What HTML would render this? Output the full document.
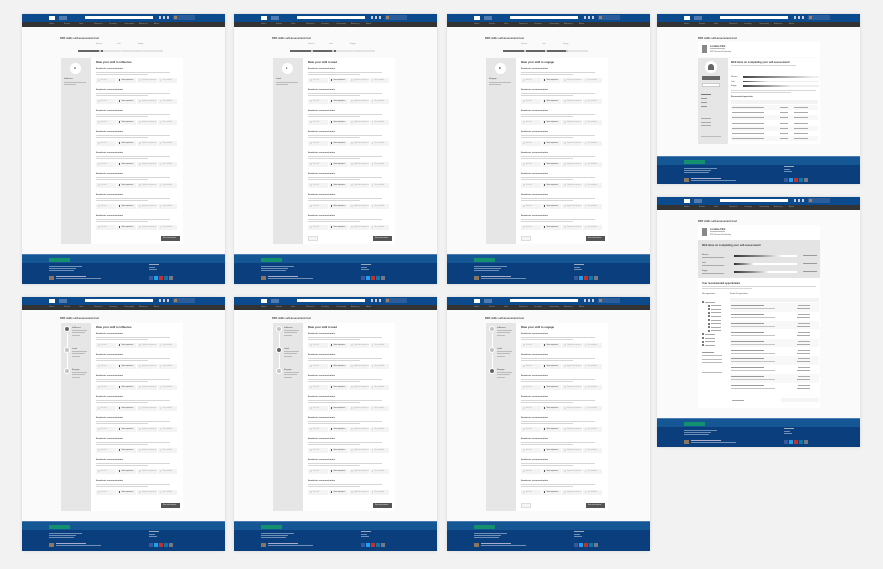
<!DOCTYPE html>
<html><head><meta charset="utf-8">
<style>
*{margin:0;padding:0;box-sizing:border-box}
body{width:883px;height:569px;background:#f2f2f2;position:relative;overflow:hidden;font-family:"Liberation Sans",sans-serif}
.t{position:absolute;background:#fafafa;box-shadow:0 0 3px rgba(0,0,0,.12);overflow:hidden}
.a{position:absolute}
.tx{position:absolute;font-size:2.4px;line-height:3px;color:#666;white-space:nowrap}
</style></head><body>
<script>
var LN='#d6d6d6';
function el(p,css,cls,txt){var d=document.createElement('div');d.className=cls||'a';d.style.cssText=css;if(txt)d.textContent=txt;p.appendChild(d);return d;}
function header(t,w){
 el(t,'left:0;top:0;width:'+w+'px;height:8px;background:#0b4a8c');
 el(t,'left:27px;top:2px;width:6px;height:4px;background:#fff');
 el(t,'left:37px;top:2px;width:8px;height:4px;background:#6f8fc0;opacity:.7');
 el(t,'left:63px;top:2px;width:68px;height:3px;background:#fff');
 el(t,'left:137px;top:2px;width:2px;height:3px;background:#ccd');
 el(t,'left:141px;top:2px;width:2px;height:3px;background:#ccd');
 el(t,'left:145px;top:2px;width:2px;height:3px;background:#ccd');
 el(t,'left:151px;top:1px;width:22px;height:5px;background:#2a5d99');
 el(t,'left:152px;top:2px;width:3px;height:3px;background:#a08060');
 el(t,'left:0;top:8px;width:'+w+'px;height:4.5px;background:#333');
 var nav=['Home','Events','Jobs','Research','Learning','Community','Advocacy','About'];
 for(var i=0;i<nav.length;i++)el(t,'left:'+(27+i*15)+'px;top:8.8px;font-size:2px;color:#999','tx',nav[i]);
}
function footer(t,y,w,h){
 el(t,'left:0;top:'+y+'px;width:'+w+'px;height:'+h+'px;background:#0a3e7c');
 el(t,'left:0;top:'+y+'px;width:'+w+'px;height:1px;background:#4d7cb3');
 el(t,'left:0;top:'+(y+1)+'px;width:'+w+'px;height:8px;background:#155694');
 el(t,'left:27px;top:'+(y+4)+'px;width:21px;height:4px;background:#13906e');
 el(t,'left:27px;top:'+(y+12)+'px;width:33px;height:.7px;background:#6d8fb8');
 el(t,'left:27px;top:'+(y+14)+'px;width:27px;height:.7px;background:#6d8fb8');
 el(t,'left:27px;top:'+(y+16)+'px;width:25px;height:.7px;background:#6d8fb8');
 el(t,'left:127px;top:'+(y+10)+'px;width:10px;height:.7px;background:#9ab');
 el(t,'left:127px;top:'+(y+13)+'px;width:6px;height:.7px;background:#6d8fb8');
 el(t,'left:127px;top:'+(y+15)+'px;width:8px;height:.7px;background:#6d8fb8');
 el(t,'left:27px;top:'+(y+22)+'px;width:5px;height:4px;background:#8a7560');
 el(t,'left:34px;top:'+(y+22)+'px;width:30px;height:.7px;background:#aac');
 el(t,'left:34px;top:'+(y+24)+'px;width:45px;height:.7px;background:#6d8fb8');
 var c=['#3b5998','#1da1f2','#c4302b','#0e76a8','#778'];
 for(var i=0;i<5;i++)el(t,'left:'+(127+i*5)+'px;top:'+(y+22)+'px;width:4px;height:4px;background:'+c[i]);
}
function question(t,x,y,w){
 el(t,'left:'+x+'px;top:'+y+'px;font-size:2.2px;color:#555;font-weight:bold','tx','Academic communication');
 el(t,'left:'+x+'px;top:'+(y+4)+'px;width:'+(w-8)+'px;height:.6px;background:'+LN);
 el(t,'left:'+x+'px;top:'+(y+6)+'px;width:'+(w-30)+'px;height:.6px;background:'+LN);
 var pw=(w-4)/4;
 var lab=['Not at all','Some experience','Significant experience','Very confident'];
 for(var i=0;i<4;i++){
  el(t,'left:'+(x+i*(pw+1))+'px;top:'+(y+10)+'px;width:'+pw+'px;height:4.5px;background:#f3f3f3');
  el(t,'left:'+(x+i*(pw+1)+2)+'px;top:'+(y+11)+'px;width:1.5px;height:2px;background:'+(i==1?'#555':'#ddd'));
  el(t,'left:'+(x+i*(pw+1)+5)+'px;top:'+(y+10.8)+'px;font-size:1.5px;color:'+(i==1?'#444':'#aaa'),'tx',lab[i]);
 }
}
function assess(L,T,H,opt){
 var t=el(document.body,'left:'+L+'px;top:'+T+'px;width:203px;height:'+H+'px','t');
 header(t,203);
 var ty=opt.prog?23:20;
 el(t,'left:38px;top:'+ty+'px;font-size:2.6px;color:#444;font-weight:bold','tx','RDF skills self-assessment tool');
 var ct=opt.prog?44:26;
 if(opt.prog){
  el(t,'left:56px;top:36px;width:85px;height:1.5px;background:#e3e3e3');
  el(t,'left:56px;top:35.5px;width:'+opt.prog+'px;height:2.5px;background:#666');
  var lb=['Influence','Lead','Engage'];
  for(var i=0;i<3;i++){el(t,'left:'+(74+i*21)+'px;top:29px;font-size:1.6px;color:#999','tx',lb[i]);el(t,'left:'+(77+i*21)+'px;top:35.5px;width:2px;height:2px;background:#eee;border-radius:50%');}
 }
 var cb=opt.cb;
 el(t,'left:39px;top:'+ct+'px;width:30px;height:'+(cb-ct)+'px;background:#e6e6e6');
 el(t,'left:69px;top:'+ct+'px;width:92px;height:'+(cb-ct)+'px;background:#fff');
 if(opt.prog){
  el(t,'left:48px;top:'+(ct+5)+'px;width:11px;height:11px;background:#fff;border-radius:50%');
  el(t,'left:52px;top:'+(ct+9)+'px;font-size:3px;color:#333;font-weight:bold','tx',opt.letter);
  el(t,'left:42px;top:'+(ct+20)+'px;font-size:2.2px;color:#444','tx',opt.name);
  el(t,'left:42px;top:'+(ct+24)+'px;width:22px;height:.6px;background:#bbb');
  el(t,'left:42px;top:'+(ct+26)+'px;width:12px;height:.6px;background:#bbb');
 } else {
  for(var i=0;i<3;i++){
   var y=ct+3+i*21;
   el(t,'left:42px;top:'+y+'px;width:6px;height:6px;background:'+(i==opt.step?'#666':'#c4c4c4')+';border-radius:50%;border:1px solid #fff');
   el(t,'left:50px;top:'+(y+1)+'px;font-size:2.2px;color:#444','tx',['Influence','Lead','Engage'][i]);
   el(t,'left:50px;top:'+(y+4)+'px;width:15px;height:.6px;background:#bbb');
   el(t,'left:50px;top:'+(y+6)+'px;width:13px;height:.6px;background:#bbb');
   el(t,'left:50px;top:'+(y+9)+'px;width:8px;height:.6px;background:#bbb');
   if(i<2)el(t,'left:44.5px;top:'+(y+7)+'px;width:1px;height:14px;background:#fff');
  }
 }
 el(t,'left:74px;top:'+(ct+3)+'px;font-size:2.8px;color:#333;font-weight:bold','tx',opt.heading);
 for(var q=0;q<8;q++)question(t,74,ct+10+q*21,82);
 el(t,'left:139px;top:'+(cb-8)+'px;width:19px;height:5px;background:#555');
 el(t,'left:141px;top:'+(cb-7)+'px;font-size:1.6px;color:#eee','tx','Save and continue');
 if(opt.back)el(t,'left:74px;top:'+(cb-8)+'px;width:10px;height:5px;background:#f5f5f5;border:.5px solid #ddd');
 footer(t,H-30,203,30);
}
assess(22,14,270,{prog:25,cb:230,letter:'A',name:'Influence',heading:'Rate your skill to influence'});
assess(234,14,270,{prog:46,cb:230,letter:'L',name:'Lead',heading:'Rate your skill to lead',back:1});
assess(447,14,270,{prog:65,cb:230,letter:'E',name:'Engage',heading:'Rate your skill to engage',back:1});
assess(22,297,254,{cb:214,step:0,heading:'Rate your skill to influence'});
assess(234,297,254,{cb:214,step:1,heading:'Rate your skill to lead'});
assess(447,297,254,{cb:214,step:2,heading:'Rate your skill to engage',back:1});

function profile(t){
 el(t,'left:41px;top:28px;width:122px;height:15px;background:#fff');
 el(t,'left:45px;top:31px;width:5px;height:8px;background:#888');
 el(t,'left:53px;top:31px;font-size:2.4px;color:#333;font-weight:bold','tx','Lorraine Flint');
 el(t,'left:53px;top:34px;width:15px;height:.6px;background:#bbb');
 el(t,'left:53px;top:36.5px;font-size:1.8px;color:#555','tx','RDF Research Fellowship');
}
(function(){
 var t=el(document.body,'left:657px;top:14px;width:203px;height:170px','t');
 header(t,203);
 el(t,'left:41px;top:23px;font-size:2.6px;color:#444;font-weight:bold','tx','RDF skills self-assessment tool');
 profile(t);
 el(t,'left:41px;top:44px;width:30px;height:86px;background:#e6e6e6');
 el(t,'left:71px;top:44px;width:92px;height:86px;background:#fff');
 el(t,'left:48px;top:47px;width:12px;height:12px;background:#fff;border-radius:50%');
 el(t,'left:51px;top:50px;width:6px;height:6px;background:#666;border-radius:50% 50% 0 0');
 el(t,'left:45px;top:62px;width:18px;height:4px;background:#666');
 el(t,'left:45px;top:69px;width:18px;height:4px;background:#fff;border:.5px solid #ccc');
 for(var i=0;i<4;i++)el(t,'left:44px;top:'+(80+i*4)+'px;width:'+(i?6:10)+'px;height:1.2px;background:'+(i?'#999':'#777'));
 for(var i=0;i<3;i++)el(t,'left:44px;top:'+(104+i*3.5)+'px;width:10px;height:1.2px;background:#aaa');
 el(t,'left:44px;top:122px;width:20px;height:1px;background:#bbb');
 el(t,'left:74px;top:47px;font-size:2.6px;color:#333;font-weight:bold','tx','Well done on completing your self-assessment!');
 el(t,'left:74px;top:51px;width:65px;height:.6px;background:'+LN);
 var pw=[70,25,48];
 for(var i=0;i<3;i++){el(t,'left:74px;top:'+(62+i*4.5)+'px;font-size:1.6px;color:#444','tx',['Influence','Lead','Engage'][i]);
  el(t,'left:86px;top:'+(62+i*4.5)+'px;width:76px;height:1.5px;background:#eee');
  el(t,'left:86px;top:'+(62+i*4.5)+'px;width:'+pw[i]+'px;height:1.5px;background:linear-gradient(90deg,#444,#999,#eee)');}
 el(t,'left:74px;top:76px;width:85px;height:.6px;background:'+LN);
 el(t,'left:74px;top:78px;width:60px;height:.6px;background:'+LN);
 el(t,'left:74px;top:82px;font-size:1.6px;color:#444;font-weight:bold','tx','Recommended opportunities');
 el(t,'left:74px;top:86px;width:87px;height:4px;background:#f3f3f3');
 for(var i=0;i<7;i++){var y=91+i*5.2;el(t,'left:74px;top:'+y+'px;width:87px;height:5px;background:'+(i%2?'#fff':'#f8f8f8'));
  el(t,'left:75px;top:'+(y+2)+'px;width:32px;height:.6px;background:#aaa');el(t,'left:123px;top:'+(y+2)+'px;width:8px;height:.6px;background:#aaa');el(t,'left:137px;top:'+(y+2)+'px;width:14px;height:.6px;background:#aaa');}
 footer(t,142,203,28);
})();
(function(){
 var t=el(document.body,'left:657px;top:197px;width:203px;height:250px','t');
 header(t,203);
 el(t,'left:41px;top:23px;font-size:2.6px;color:#444;font-weight:bold','tx','RDF skills self-assessment tool');
 profile(t);
 el(t,'left:41px;top:43px;width:122px;height:38px;background:#e4e4e4');
 el(t,'left:45px;top:47px;font-size:2.6px;color:#333;font-weight:bold','tx','Well done on completing your self-assessment!');
 var pw=[48,20,35];
 for(var i=0;i<3;i++){var y=57+i*8;el(t,'left:45px;top:'+y+'px;font-size:1.6px;color:#444','tx',['Influence','Lead','Engage'][i]);
  el(t,'left:45px;top:'+(y+3)+'px;width:22px;height:.6px;background:#aaa');
  el(t,'left:77px;top:'+(y+1)+'px;width:63px;height:2px;background:#fff');
  el(t,'left:77px;top:'+(y+1)+'px;width:'+pw[i]+'px;height:2px;background:linear-gradient(90deg,#333,#888,#fff)');
  el(t,'left:146px;top:'+(y+1)+'px;width:14px;height:.6px;background:#999');}
 el(t,'left:41px;top:81px;width:122px;height:130px;background:#fff');
 el(t,'left:45px;top:85px;font-size:2.4px;color:#333;font-weight:bold','tx','Your recommended opportunities');
 el(t,'left:45px;top:89px;width:114px;height:.6px;background:'+LN);
 el(t,'left:45px;top:91px;width:50px;height:.6px;background:'+LN);
 el(t,'left:45px;top:96px;font-size:1.6px;color:#444','tx','Filter opportunities');
 el(t,'left:73px;top:96px;font-size:1.6px;color:#444','tx','Results: 42 opportunities');
 for(var i=0;i<13;i++)el(t,'left:'+(i>0&&i<9?51:45)+'px;top:'+(104+i*3.6)+'px;width:2px;height:2px;background:#777');
 for(var i=0;i<13;i++)el(t,'left:'+(i>0&&i<9?54:48)+'px;top:'+(104.5+i*3.6)+'px;width:10px;height:.7px;background:#aaa');
 el(t,'left:45px;top:155px;width:12px;height:.7px;background:#999');
 for(var i=0;i<3;i++)el(t,'left:45px;top:'+(158+i*3.5)+'px;width:20px;height:.7px;background:#bbb');
 el(t,'left:45px;top:175px;width:20px;height:1px;background:#bbb');
 el(t,'left:73px;top:101px;width:89px;height:4px;background:#f3f3f3');
 for(var i=0;i<10;i++){var y=106+i*8.9;el(t,'left:73px;top:'+y+'px;width:89px;height:8.5px;background:'+(i%2?'#fff':'#f8f8f8'));
  el(t,'left:74px;top:'+(y+2)+'px;width:33px;height:.7px;background:#999');el(t,'left:74px;top:'+(y+5)+'px;width:44px;height:.6px;background:#c4c4c4');
  el(t,'left:141px;top:'+(y+2)+'px;width:12px;height:.6px;background:#aaa');el(t,'left:140px;top:'+(y+5)+'px;width:13px;height:.6px;background:#aaa');}
 el(t,'left:75px;top:203px;width:12px;height:.7px;background:#aaa');
 el(t,'left:124px;top:201px;width:38px;height:4px;background:#f5f5f5');
 footer(t,221,203,29);
})();
</script>
</body></html>
